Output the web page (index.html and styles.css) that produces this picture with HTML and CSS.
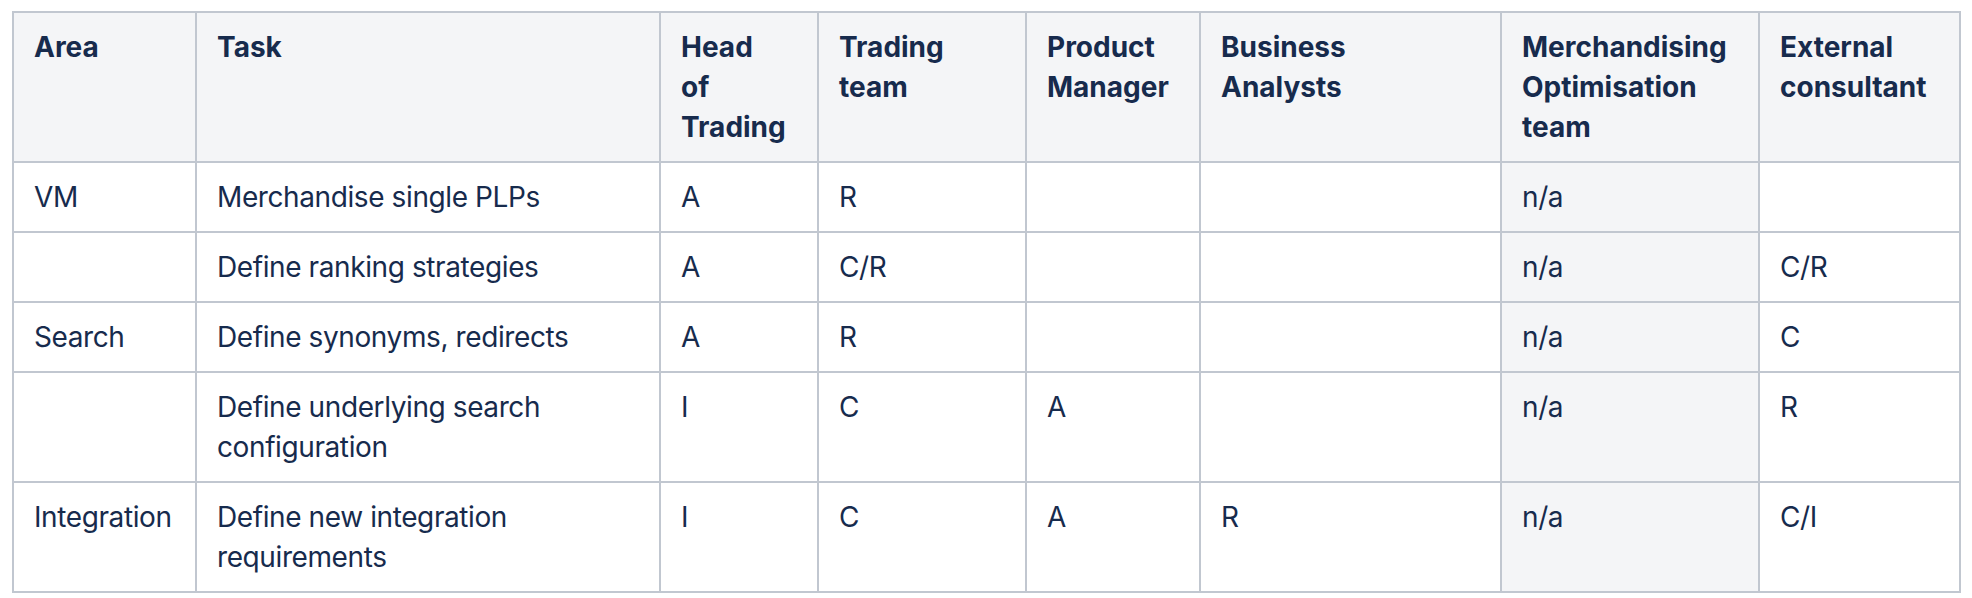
FILE: index.html
```html
<!DOCTYPE html>
<html lang="en">
<head>
<meta charset="utf-8">
<title>RACI table</title>
<link rel="stylesheet" href="styles.css">
</head>
<body>
<div class="wrap">
<table class="raci">
  <colgroup>
    <col class="c-area">
    <col class="c-task">
    <col class="c-head">
    <col class="c-trading">
    <col class="c-pm">
    <col class="c-ba">
    <col class="c-mo">
    <col class="c-ext">
  </colgroup>
  <thead>
    <tr>
      <th>Area</th>
      <th>Task</th>
      <th>Head<br>of<br>Trading</th>
      <th>Trading team</th>
      <th>Product Manager</th>
      <th>Business<br>Analysts</th>
      <th>Merchandising Optimisation team</th>
      <th>External consultant</th>
    </tr>
  </thead>
  <tbody>
    <tr>
      <td>VM</td>
      <td>Merchandise single PLPs</td>
      <td>A</td>
      <td>R</td>
      <td></td>
      <td></td>
      <td class="shade">n/a</td>
      <td></td>
    </tr>
    <tr>
      <td></td>
      <td>Define ranking strategies</td>
      <td>A</td>
      <td>C/R</td>
      <td></td>
      <td></td>
      <td class="shade">n/a</td>
      <td>C/R</td>
    </tr>
    <tr>
      <td>Search</td>
      <td>Define synonyms, redirects</td>
      <td>A</td>
      <td>R</td>
      <td></td>
      <td></td>
      <td class="shade">n/a</td>
      <td>C</td>
    </tr>
    <tr>
      <td></td>
      <td>Define underlying search configuration</td>
      <td>I</td>
      <td>C</td>
      <td>A</td>
      <td></td>
      <td class="shade">n/a</td>
      <td>R</td>
    </tr>
    <tr>
      <td>Integration</td>
      <td>Define new integration requirements</td>
      <td>I</td>
      <td>C</td>
      <td>A</td>
      <td>R</td>
      <td class="shade">n/a</td>
      <td>C/I</td>
    </tr>
  </tbody>
</table>
</div>
</body>
</html>
```

FILE: styles.css
```css
html, body {
  margin: 0;
  padding: 0;
  background: #ffffff;
}

body {
  font-family: Inter, "Noto Sans", "Liberation Sans", sans-serif;
  color: #172b4d;
}

.wrap {
  padding: 11px 0 0 12px;
}

.raci {
  border-collapse: collapse;
  table-layout: fixed;
  width: 1947px;
  font-size: 28px;
  line-height: 40px;
}

.c-area { width: 183px; }
.c-task { width: 464px; }
.c-head { width: 158px; }
.c-trading { width: 208px; }
.c-pm { width: 174px; }
.c-ba { width: 301px; }
.c-mo { width: 258px; }
.c-ext { width: 201px; }

.raci th,
.raci td {
  border: 2px solid #c1c7d0;
  padding: 14px 20px;
  text-align: left;
  vertical-align: top;
}

.raci th {
  background: #f4f5f7;
  font-weight: 700;
}

.raci td {
  font-weight: 400;
  letter-spacing: -0.4px;
}

.raci td.shade {
  background: #f4f5f7;
}
```
